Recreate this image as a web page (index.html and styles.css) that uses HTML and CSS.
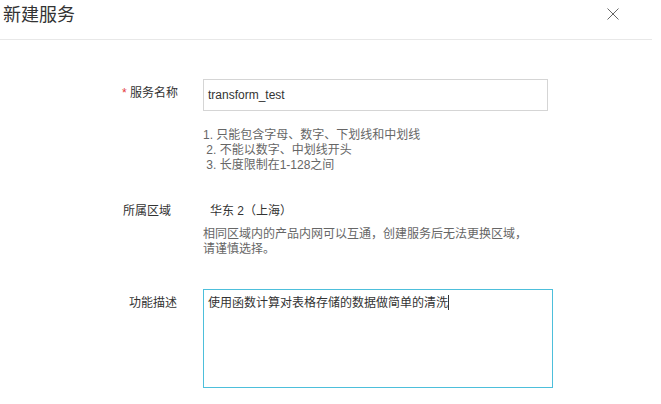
FILE: index.html
```html
<!DOCTYPE html>
<html lang="zh">
<head>
    <meta charset="UTF-8">
    <meta name="viewport" content="width=device-width, initial-scale=1.0">
    <title>新建服务</title>
    <link rel="stylesheet" href="styles.css">
</head>
<body>
    <div class="dialog">
        <div class="dialog-header">
            <h1 class="dialog-title">新建服务</h1>
            <span class="close-btn">
                <svg width="12" height="12" viewBox="0 0 12 12">
                    <path d="M0.5 0.5 L11.5 11.5 M11.5 0.5 L0.5 11.5" stroke="#666" stroke-width="1" fill="none"/>
                </svg>
            </span>
        </div>

        <div class="dialog-body">
            <div class="form-row row-name">
                <label class="form-label"><span class="required">*</span> 服务名称</label>
                <div class="form-control">
                    <div class="text-input">transform_test</div>
                    <div class="help-text">
                        1. 只能包含字母、数字、下划线和中划线<br>
                        &nbsp;2. 不能以数字、中划线开头<br>
                        &nbsp;3. 长度限制在1-128之间
                    </div>
                </div>
            </div>

            <div class="form-row row-region">
                <label class="form-label label-region">所属区域</label>
                <div class="form-control">
                    <div class="region-value">华东 2（上海）</div>
                    <div class="help-text region-hint">
                        相同区域内的产品内网可以互通，创建服务后无法更换区域，<br>
                        请谨慎选择。
                    </div>
                </div>
            </div>

            <div class="form-row row-desc">
                <label class="form-label label-desc">功能描述</label>
                <div class="form-control">
                    <div class="textarea">使用函数计算对表格存储的数据做简单的清洗<span class="caret"></span></div>
                </div>
            </div>
        </div>
    </div>
</body>
</html>
```

FILE: styles.css
```css
body {
    margin: 0;
    background-color: white;
    font-family: "Liberation Sans", "Noto Sans CJK SC", sans-serif;
    color: #333;
}
.dialog {
    width: 652px;
}
.dialog-header {
    display: flex;
    justify-content: space-between;
    align-items: flex-start;
    height: 39px;
    border-bottom: 1px solid #e8e8e8;
}
.dialog-title {
    margin: 0 0 0 3px;
    font-size: 18px;
    font-weight: normal;
    line-height: 30px;
    color: #333;
}
.close-btn {
    display: block;
    width: 12px;
    height: 12px;
    margin: 8px 33px 0 0;
}
.close-btn svg {
    display: block;
}
.form-row {
    display: flex;
    align-items: flex-start;
}
.form-label {
    width: 178px;
    flex-shrink: 0;
    text-align: right;
    font-size: 12px;
    color: #333;
    margin-right: 25px;
}
.required {
    color: #e4393c;
}
.form-control {
    flex: 1;
}
.row-name {
    margin-top: 39px;
}
.row-name .form-label {
    line-height: 29px;
}
.text-input {
    width: 335px;
    height: 30px;
    padding: 0 4px;
    border: 1px solid #d5d5d5;
    font-size: 12px;
    line-height: 30px;
    color: #333;
}
.help-text {
    font-size: 12px;
    line-height: 15px;
    color: #666;
}
.row-name .help-text {
    margin-top: 17px;
}
.row-region {
    margin-top: 29px;
}
.row-region .form-label,
.region-value {
    line-height: 18px;
    font-size: 12px;
}
.label-region {
    width: 171px;
    margin-right: 32px;
}
.region-value {
    padding-left: 7px;
    color: #333;
}
.region-hint {
    margin-top: 7px;
}
.row-desc {
    margin-top: 32px;
}
.label-desc {
    width: 177px;
    margin-right: 26px;
    line-height: 28px;
}
.textarea {
    width: 340px;
    height: 89px;
    padding: 4px;
    border: 1px solid #4dbfdb;
    font-size: 12px;
    line-height: 18px;
    color: #333;
}
.caret {
    display: inline-block;
    width: 1px;
    height: 15px;
    background-color: #333;
    vertical-align: -3px;
}
```
